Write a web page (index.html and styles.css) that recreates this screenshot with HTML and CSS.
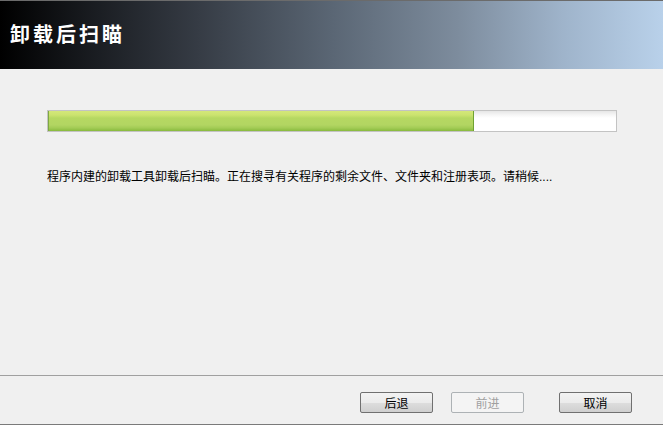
FILE: index.html
```html
<!DOCTYPE html>
<html lang="zh">
<head>
<meta charset="utf-8">
<link rel="stylesheet" href="styles.css">
</head>
<body>
<div class="window">
  <header class="banner">
    <h1 class="title">卸载后扫瞄</h1>
  </header>
  <main class="content">
    <div class="progress">
      <div class="progress-fill" style="width: 75%"></div>
    </div>
    <p class="status">程序内建的卸载工具卸载后扫瞄。正在搜寻有关程序的剩余文件、文件夹和注册表项。请稍候<span class="dots">....</span></p>
  </main>
  <footer class="footer">
    <button class="btn">后退</button>
    <button class="btn btn-disabled" disabled>前进</button>
    <button class="btn btn-cancel">取消</button>
  </footer>
</div>
</body>
</html>
```

FILE: styles.css
```css
html, body {
  margin: 0;
  padding: 0;
  background: #f0f0f0;
}

.window {
  width: 663px;
  height: 425px;
  display: flex;
  flex-direction: column;
  font-family: "Noto Sans CJK SC", "Noto Sans", sans-serif;
  color: #000;
  overflow: hidden;
}

.banner {
  height: 68px;
  border-top: 1px solid #6b6b6b;
  background: linear-gradient(to right, #000000 0%, #1b1e23 15%, #363c45 30%, #5a6674 50%, #7d8c9d 69%, #9fb4cb 85%, #b9d1ea 100%);
  display: flex;
  align-items: center;
  padding-left: 10px;
  flex: none;
}

.title {
  margin: 0;
  color: #fff;
  font-size: 20px;
  font-weight: bold;
  letter-spacing: 3px;
  line-height: 24px;
  margin-top: -2px;
}

.content {
  flex: 1;
  padding: 41px 0 0 47px;
}

.progress {
  width: 568px;
  height: 20px;
  border: 1px solid #c3c3c3;
  background: linear-gradient(to bottom, #e6e6e6 0%, #f6f6f6 20%, #ffffff 35%, #ffffff 100%);
  display: flex;
}

.progress-fill {
  height: 100%;
  box-sizing: border-box;
  border-left: 1px solid #7fa844;
  border-right: 1px solid #6fa232;
  background: linear-gradient(to bottom, #d4e779 0%, #cbe36f 20%, #b6d862 35%, #b2d562 70%, #a2cb55 85%, #88ba3d 100%);
}

.status {
  margin: 36px 0 0 0;
  font-size: 12px;
  line-height: 16px;
  white-space: nowrap;
}

.dots {
  font-family: "Liberation Sans", sans-serif;
  letter-spacing: 0;
}

.footer {
  flex: none;
  height: 32px;
  border-top: 1px solid #a0a0a0;
  border-bottom: 1px solid #7a7a7a;
  display: flex;
  justify-content: flex-end;
  align-items: flex-start;
  padding: 16px 31px 0 0;
  box-sizing: content-box;
}

.btn {
  width: 73px;
  height: 21px;
  margin: 0;
  padding: 0;
  border: 1px solid #707070;
  border-radius: 2px;
  background: linear-gradient(to bottom, #f3f3f3 0%, #ebebeb 50%, #dddddd 52%, #cfcfcf 100%);
  font-family: "Noto Sans CJK SC", sans-serif;
  font-size: 12px;
  line-height: 18px;
  color: #000;
}

.btn + .btn {
  margin-left: 18px;
}

.btn-disabled {
  border-color: #adb2b5;
  background: #f4f4f4;
  color: #a0a0a0;
}

.btn.btn-cancel {
  margin-left: 35px;
}
```
